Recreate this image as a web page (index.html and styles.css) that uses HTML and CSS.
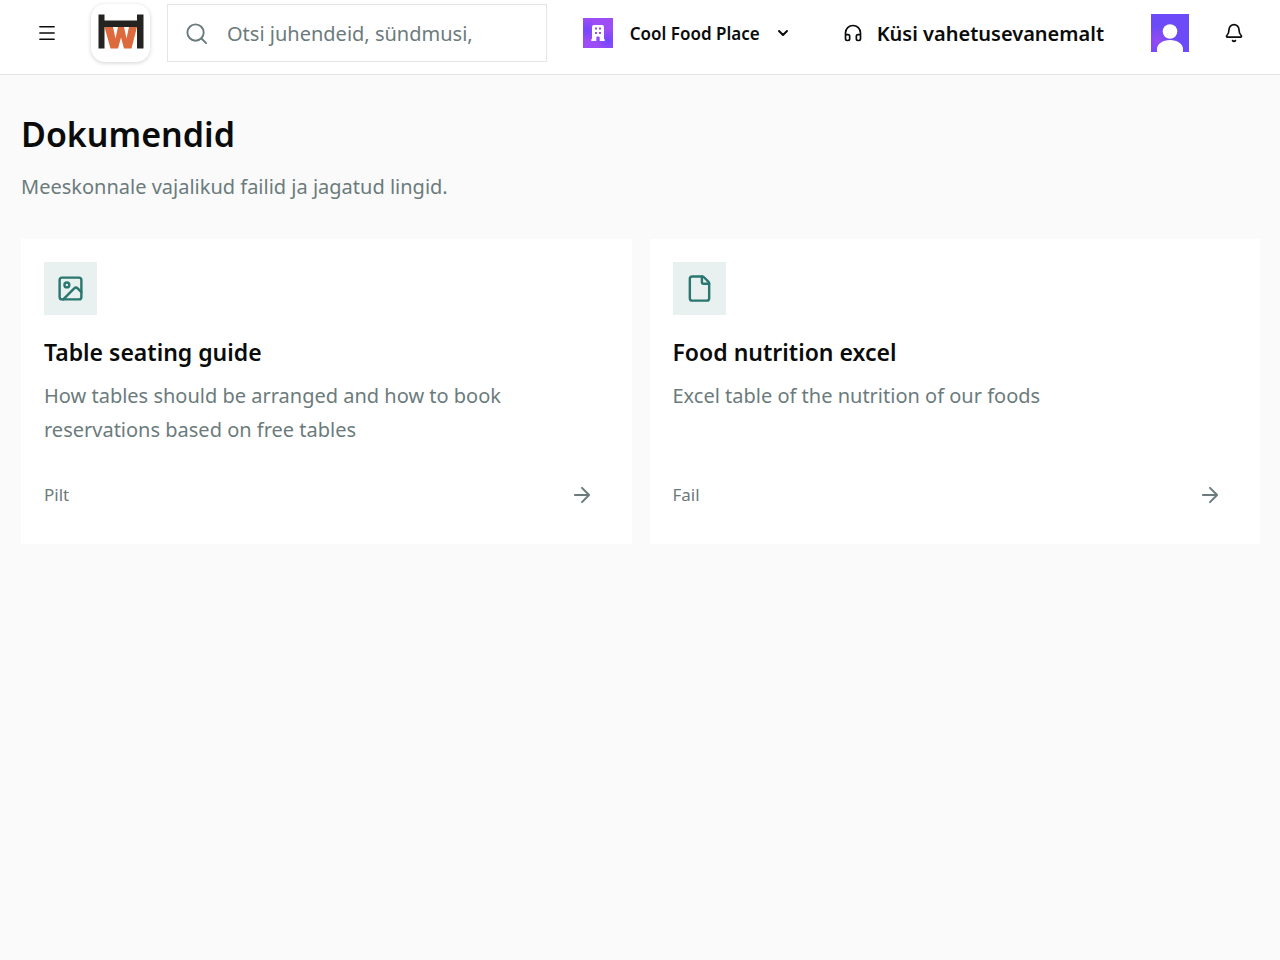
FILE: index.html
```html
<!DOCTYPE html>
<html lang="et">
<head>
  <meta charset="UTF-8">
  <meta name="viewport" content="width=device-width, initial-scale=1">
  <title>Dokumendid</title>
  <link rel="stylesheet" href="styles.css">
</head>
<body>

  <header class="topbar">
    <button type="button" class="icon-button menu-button" aria-label="Menüü">
      <svg class="icon" viewBox="0 0 24 24"><path d="M3.500 4.500h17M3.500 12h17M3.500 19.500h17"/></svg>
    </button>

    <a href="#" class="logo" aria-label="Avaleht">
      <svg viewBox="0 0 46 36">
        <path fill="#dd6a3c" d="M6.500 13h8.500l2.500 11.500L20 13h6l2.500 11.500L31 13h8l-5.500 21.500h-7.500L23 23.500l-3 11h-7.500z"/>
        <path fill="#242321" d="M.5.500h6V6.500H39V.500h6.500v34H39V13H6.500v21.500h-6z"/>
      </svg>
    </a>

    <label class="search">
      <svg class="icon search-icon" viewBox="0 0 24 24"><circle cx="11" cy="11" r="8.500"/><path d="m17.200 17.200 4.800 4.800"/></svg>
      <input type="search" placeholder="Otsi juhendeid, sündmusi," aria-label="Otsi">
    </label>

    <button type="button" class="org-button">
      <svg class="org-logo" viewBox="0 0 30 30">
        <defs>
          <radialGradient id="orgGlow">
            <stop offset="0" stop-color="#7047fa"/>
            <stop offset="1" stop-color="#7047fa" stop-opacity="0"/>
          </radialGradient>
        </defs>
        <path fill="#9d4df5" d="M0 0h30v30H0z"/>
        <circle cx="4" cy="12" r="11" fill="url(#orgGlow)"/>
        <circle cx="25" cy="23" r="12" fill="url(#orgGlow)"/>
        <path fill="#fff" fill-rule="evenodd" d="M11 7h8q2 0 2 2v11.500q0 .5.700.7v1.800h-5V19.500q0-1-1-1h-1.400q-1 0-1 1V23h-5v-1.800q.700-.2.700-.7V9q0-2 2-2zM12 9.500v2h2v-2zm4 0v2h2v-2zm-4 4.500v2h2v-2zm4 0v2h2v-2z"/>
      </svg>
      <span>Cool Food Place</span>
      <svg class="icon chevron" viewBox="0 0 14 14"><path d="m3 5 4 4 4-4"/></svg>
    </button>

    <button type="button" class="ask-button">
      <svg class="icon" viewBox="0 0 24 24"><path d="M3 14h3a2 2 0 0 1 2 2v3a2 2 0 0 1-2 2H5a2 2 0 0 1-2-2v-7a9 9 0 0 1 18 0v7a2 2 0 0 1-2 2h-1a2 2 0 0 1-2-2v-3a2 2 0 0 1 2-2h3"/></svg>
      <span>Küsi vahetusevanemalt</span>
    </button>

    <button type="button" class="icon-button avatar" aria-label="Profiil">
      <svg viewBox="0 0 38 38">
        <defs>
          <radialGradient id="avatarGlow">
            <stop offset="0" stop-color="#9549f4"/>
            <stop offset="1" stop-color="#9549f4" stop-opacity="0"/>
          </radialGradient>
        </defs>
        <path fill="#6c4af7" d="M0 0h38v38H0z"/>
        <circle cx="6" cy="27" r="15" fill="url(#avatarGlow)"/>
        <circle cx="19" cy="17.500" r="7.300" fill="#fff"/>
        <path fill="#fff" d="M6 38v-3c0-5 5.500-9 13-9s13 4 13 9v3z"/>
      </svg>
    </button>

    <button type="button" class="icon-button bell-button" aria-label="Teavitused">
      <svg class="icon" viewBox="0 0 24 24"><path d="M10.268 21a2 2 0 0 0 3.464 0"/><path d="M3.262 15.326A1 1 0 0 0 4 17h16a1 1 0 0 0 .740-1.673C19.410 13.956 18 12.499 18 8A6 6 0 0 0 6 8c0 4.499-1.411 5.956-2.738 7.326"/></svg>
    </button>
  </header>

  <main class="page">
    <h1>Dokumendid</h1>
    <p class="subtitle">Meeskonnale vajalikud failid ja jagatud lingid.</p>

    <div class="documents">
      <a href="#" class="card">
        <span class="card-icon">
          <svg class="icon" viewBox="0 0 24 24"><rect x="3" y="3" width="18" height="18" rx="2"/><circle cx="9" cy="9" r="2"/><path d="m21 15-3.086-3.086a2 2 0 0 0-2.828 0L6 21"/></svg>
        </span>
        <h2>Table seating guide</h2>
        <p>How tables should be arranged and how to book reservations based on free tables</p>
        <span class="card-footer">
          Pilt
          <svg class="icon arrow" viewBox="0 0 24 24"><path d="M3.500 12h17M12 3.500l8.500 8.500-8.500 8.500"/></svg>
        </span>
      </a>

      <a href="#" class="card">
        <span class="card-icon">
          <svg class="icon" viewBox="0 0 24 24"><path d="M6 22a2 2 0 0 1-2-2V4a2 2 0 0 1 2-2h8a2.400 2.400 0 0 1 1.704.706l3.588 3.588A2.400 2.400 0 0 1 20 8v12a2 2 0 0 1-2 2z"/><path d="M14 2v5a1 1 0 0 0 1 1h5"/></svg>
        </span>
        <h2>Food nutrition excel</h2>
        <p>Excel table of the nutrition of our foods</p>
        <span class="card-footer">
          Fail
          <svg class="icon arrow" viewBox="0 0 24 24"><path d="M3.500 12h17M12 3.500l8.500 8.500-8.500 8.500"/></svg>
        </span>
      </a>
    </div>
  </main>

</body>
</html>
```
FILE: styles.css
```css
* {
  margin: 0;
  padding: 0;
  box-sizing: border-box;
}

body {
  background-color: #fafafa;
  color: #0a0c0c;
  font-family: "Noto Sans", sans-serif;
  font-size: 20px;
  min-height: 100vh;
}

button {
  background: none;
  border: none;
  color: inherit;
  font-family: inherit;
  cursor: pointer;
}

svg {
  display: block;
  flex-shrink: 0;
}

.icon {
  width: 20px;
  height: 20px;
  fill: none;
  stroke: currentColor;
  stroke-width: 2;
  stroke-linecap: round;
  stroke-linejoin: round;
}

.topbar {
  display: flex;
  align-items: center;
  background-color: #fff;
  border-bottom: 1px solid #e2e6e6;
  padding: 4px 24px 12px 25px;
}

.icon-button {
  display: flex;
  align-items: center;
  justify-content: center;
  flex-shrink: 0;
  width: 44px;
  height: 44px;
}

.menu-button {
  margin-right: 22px;
}

.logo {
  display: flex;
  align-items: center;
  justify-content: center;
  width: 59px;
  height: 58px;
  margin-right: 17px;
  border-radius: 14px;
  background-color: #fff;
  box-shadow: 0 1px 4px rgba(0, 0, 0, 0.18);
}

.logo svg {
  width: 46px;
  height: 36px;
  margin-bottom: 2px;
}

.search {
  display: flex;
  align-items: center;
  flex: 1;
  min-width: 0;
  height: 58px;
  padding: 0 17px;
  gap: 19px;
  border: 1px solid #e2e6e6;
  color: #6b7b7c;
}

.search-icon {
  width: 23px;
  height: 23px;
}

.search input {
  flex: 1;
  min-width: 0;
  border: none;
  outline: none;
  background: none;
  font-family: inherit;
  font-size: 20px;
  color: #0a0c0c;
}

.search input::placeholder {
  color: #6b7b7c;
  opacity: 1;
}

.org-button {
  display: flex;
  align-items: center;
  margin-left: 36px;
  font-size: 17px;
  font-weight: 600;
  white-space: nowrap;
}

.org-logo {
  width: 30px;
  height: 30px;
  margin-right: 17px;
}

.chevron {
  width: 14px;
  height: 14px;
  margin-left: 16px;
}

.ask-button {
  display: flex;
  align-items: center;
  gap: 14px;
  margin-left: 53px;
  font-size: 20px;
  font-weight: 600;
  white-space: nowrap;
}

.avatar {
  margin: 0 20px 0 44px;
}

.avatar svg {
  width: 38px;
  height: 38px;
}

.page {
  padding: 32px 20px 32px 21px;
}

h1 {
  font-size: 34px;
  font-weight: 600;
  line-height: 54px;
}

.subtitle {
  margin-top: 9px;
  color: #6b7b7c;
  line-height: 34px;
}

.documents {
  display: grid;
  grid-template-columns: 1fr 1fr;
  gap: 18px;
  margin-top: 35px;
}

.card {
  display: flex;
  flex-direction: column;
  background-color: #fff;
  color: inherit;
  padding: 23px;
  text-decoration: none;
}

.card-icon {
  display: flex;
  align-items: center;
  justify-content: center;
  width: 53px;
  height: 53px;
  background-color: #e9f1f0;
  color: #29776f;
}

.card-icon .icon {
  width: 29px;
  height: 29px;
}

.card h2 {
  margin-top: 19px;
  font-size: 23px;
  font-weight: 600;
  line-height: 36px;
}

.card p {
  margin-top: 9px;
  color: #6b7b7c;
  line-height: 34px;
}

.card-footer {
  display: flex;
  align-items: center;
  justify-content: space-between;
  margin-top: auto;
  padding: 33px 17px 11px 0;
  color: #6b7b7c;
  font-size: 17px;
  line-height: 30px;
}

.arrow {
  stroke-width: 2.400;
}

@media (max-width: 900px) {
  .topbar {
    flex-wrap: wrap;
  }

  .documents {
    grid-template-columns: 1fr;
  }
}
```
